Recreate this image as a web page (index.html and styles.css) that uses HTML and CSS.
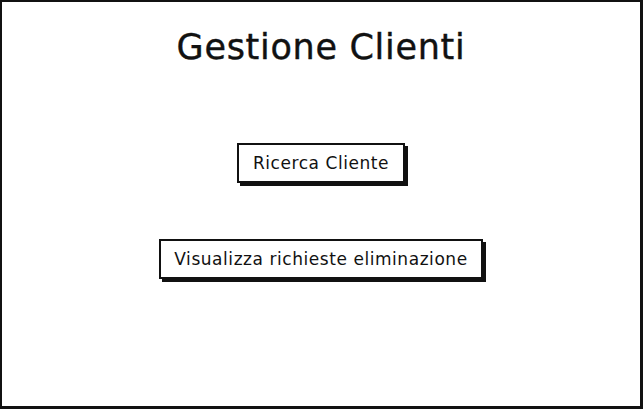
FILE: index.html
```html
<!DOCTYPE html>
<html>
<head>
    <meta charset="UTF-8">
    <title>Gestione Clienti</title>
    <link rel="stylesheet" href="styles.css">
</head>
<body>
    <div class="frame">
        <h1 class="title">Gestione Clienti</h1>
        <div class="actions">
            <button class="sketch-button search">Ricerca Cliente</button>
            <button class="sketch-button requests">Visualizza richieste eliminazione</button>
        </div>
    </div>
</body>
</html>
```

FILE: styles.css
```css
html, body {
    margin: 0;
    padding: 0;
    background-color: #fff;
}
body {
    font-family: "DejaVu Sans", "Noto Sans", sans-serif;
    color: #111;
}
.frame {
    box-sizing: border-box;
    width: 643px;
    height: 409px;
    border: 2px solid #111;
    border-right-width: 3px;
    border-bottom-width: 3px;
    display: flex;
    flex-direction: column;
    align-items: center;
}
.title {
    margin: 22px 0 0 0;
    font-size: 35px;
    font-weight: 400;
    line-height: 46px;
    letter-spacing: 0.7px;
    -webkit-text-stroke: 0.4px #111;
}
.actions {
    display: flex;
    flex-direction: column;
    align-items: center;
    gap: 56px;
    margin-top: 73px;
}
.sketch-button {
    box-sizing: border-box;
    height: 40px;
    padding: 0 10px;
    background-color: #fff;
    border: 2px solid #111;
    box-shadow: 3px 3px 0 #111;
    font-family: inherit;
    font-size: 17px;
    letter-spacing: 0.55px;
    color: #111;
    cursor: pointer;
}
.search {
    width: 168px;
}
.requests {
    width: 324px;
}
```
